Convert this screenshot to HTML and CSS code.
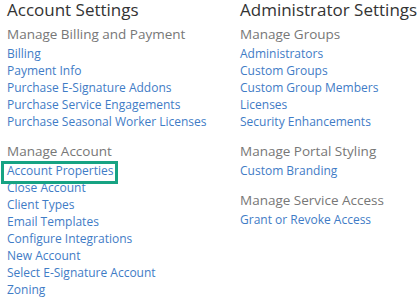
FILE: index.html
```html
<!DOCTYPE html>
<html lang="en">
<head>
  <meta charset="UTF-8">
  <title>Settings</title>
  <link rel="stylesheet" href="styles.css">
</head>
<body>
  <div class="settings">
    <!-- left column -->
    <div class="settings-col">
      <h1>Account Settings</h1>
      <h2>Manage Billing and Payment</h2>
      <ul>
        <li><a href="#">Billing</a></li>
        <li><a href="#">Payment Info</a></li>
        <li><a href="#">Purchase E-Signature Addons</a></li>
        <li><a href="#">Purchase Service Engagements</a></li>
        <li><a href="#">Purchase Seasonal Worker Licenses</a></li>
      </ul>
      <h2 class="gap">Manage Account</h2>
      <ul>
        <li><a href="#" class="marked">Account Properties</a></li>
        <li><a href="#">Close Account</a></li>
        <li><a href="#">Client Types</a></li>
        <li><a href="#">Email Templates</a></li>
        <li><a href="#">Configure Integrations</a></li>
        <li><a href="#">New Account</a></li>
        <li><a href="#">Select E-Signature Account</a></li>
        <li><a href="#">Zoning</a></li>
      </ul>
    </div>

    <!-- right column -->
    <div class="settings-col">
      <h1>Administrator Settings</h1>
      <h2>Manage Groups</h2>
      <ul>
        <li><a href="#">Administrators</a></li>
        <li><a href="#">Custom Groups</a></li>
        <li><a href="#">Custom Group Members</a></li>
        <li><a href="#">Licenses</a></li>
        <li><a href="#">Security Enhancements</a></li>
      </ul>
      <h2 class="gap">Manage Portal Styling</h2>
      <ul>
        <li><a href="#">Custom Branding</a></li>
      </ul>
      <h2 class="gap">Manage Service Access</h2>
      <ul>
        <li><a href="#">Grant or Revoke Access</a></li>
      </ul>
    </div>
  </div>
</body>
</html>
```

FILE: styles.css
```css
/* page */
body {
  margin: 0;
  background: #fff;
  font-family: "Open Sans", "Liberation Sans", sans-serif;
}
.settings {
  display: grid;
  grid-template-columns: 233px 1fr;
  padding-left: 7px;
}
/* titles */
h1 {
  margin: 0;
  font-size: 17px;
  line-height: 20px;
  font-weight: 400;
  color: #333;
  white-space: nowrap;
}
h2 {
  margin: 4px 0 0;
  font-size: 13.5px;
  line-height: 21px;
  font-weight: 400;
  color: #777;
}
h2.gap {
  margin-top: 11px;
}
/* link lists */
ul {
  list-style: none;
  margin: 0;
  padding: 0;
}
li {
  font-size: 12px;
  line-height: 17px;
}
a {
  color: #3f7cc6;
  text-decoration: none;
}
/* highlight box */
a.marked {
  position: relative;
  display: inline-block;
}
a.marked::after {
  content: "";
  position: absolute;
  left: -6px;
  top: -1px;
  width: 111px;
  height: 17px;
  border: 3px solid #17a383;
}
```
